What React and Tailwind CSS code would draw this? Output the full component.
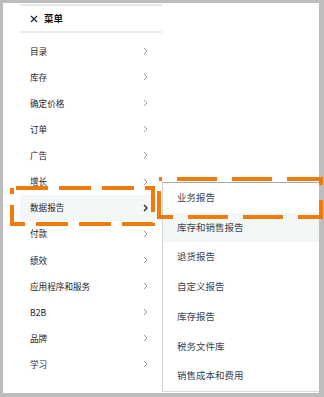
import React from 'react';

const mainItems = [
  '目录', '库存', '确定价格', '订单', '广告', '增长', '数据报告',
  '付款', '绩效', '应用程序和服务', 'B2B', '品牌', '学习',
];

const subItems = [
  '业务报告', '库存和销售报告', '退货报告', '自定义报告', '库存报告', '税务文件库', '销售成本和费用',
];

const font = { fontFamily: '"Noto Sans CJK SC", "Noto Sans", sans-serif' };

function Chevron({ dark }) {
  return (
    <svg width="5" height="8" viewBox="0 0 5 8" fill="none">
      <path d="M1 1 L4 4 L1 7" stroke={dark ? '#222' : '#9a9a9a'} strokeWidth={dark ? 1.3 : 1} />
    </svg>
  );
}

export default function App() {
  return (
    <div className="relative w-[324px] h-[397px] bg-[#bdbdbd] pt-[3px] pl-[3px] pr-[5px] pb-[4px]" style={font}>
      <div className="relative h-full bg-white pt-[1px] pl-[17px]">
        {/* Main menu */}
        <div className="w-[142px] border-t-2 border-[#e9e9e9]">
          <div className="h-[27px] flex items-center gap-[6px] pl-[10px] border-b-2 border-[#ececec]">
            <svg width="8" height="8" viewBox="0 0 8 8">
              <path d="M1 1 L7 7 M7 1 L1 7" stroke="#1b2530" strokeWidth="1.2" />
            </svg>
            <span className="text-[9.5px] font-bold text-[#0f1111]">菜单</span>
          </div>
          <div className="mt-[5px]">
            {mainItems.map((item) => {
              const active = item === '数据报告';
              return (
                <div
                  key={item}
                  className={`h-[26.1px] flex items-center justify-between pl-[10px] pr-[14px] ${active ? 'bg-[#f4f7f8]' : ''}`}
                >
                  <span className="text-[8.6px] text-[#1a242e] leading-none">{item}</span>
                  <Chevron dark={active} />
                </div>
              );
            })}
          </div>
        </div>

        {/* Submenu flyout */}
        <div className="absolute left-[159px] top-[179px] right-0 bottom-[1px] bg-white border-t border-t-[#a9a9a9] border-l border-l-[#d4d4d4] border-b border-b-[#dcdcdc]">
          {subItems.map((item) => (
            <div
              key={item}
              className={`h-[29.7px] flex items-center pl-[14px] ${item === '库存和销售报告' ? 'bg-[#f4f7f8]' : ''}`}
            >
              <span className="text-[9.5px] text-[#3b4650] leading-none">{item}</span>
            </div>
          ))}
        </div>
      </div>

      {/* Highlight annotations */}
      <svg className="absolute inset-0 pointer-events-none" width="324" height="397" viewBox="0 0 324 397">
        <rect x="12" y="188" width="141" height="36" fill="none" stroke="#f07a0a" strokeWidth="4" strokeDasharray="32 11" strokeDashoffset="-4" />
        <rect x="159" y="179" width="162" height="38" fill="none" stroke="#f07a0a" strokeWidth="4" strokeDasharray="40 15" strokeDashoffset="-18" />
      </svg>
    </div>
  );
}
